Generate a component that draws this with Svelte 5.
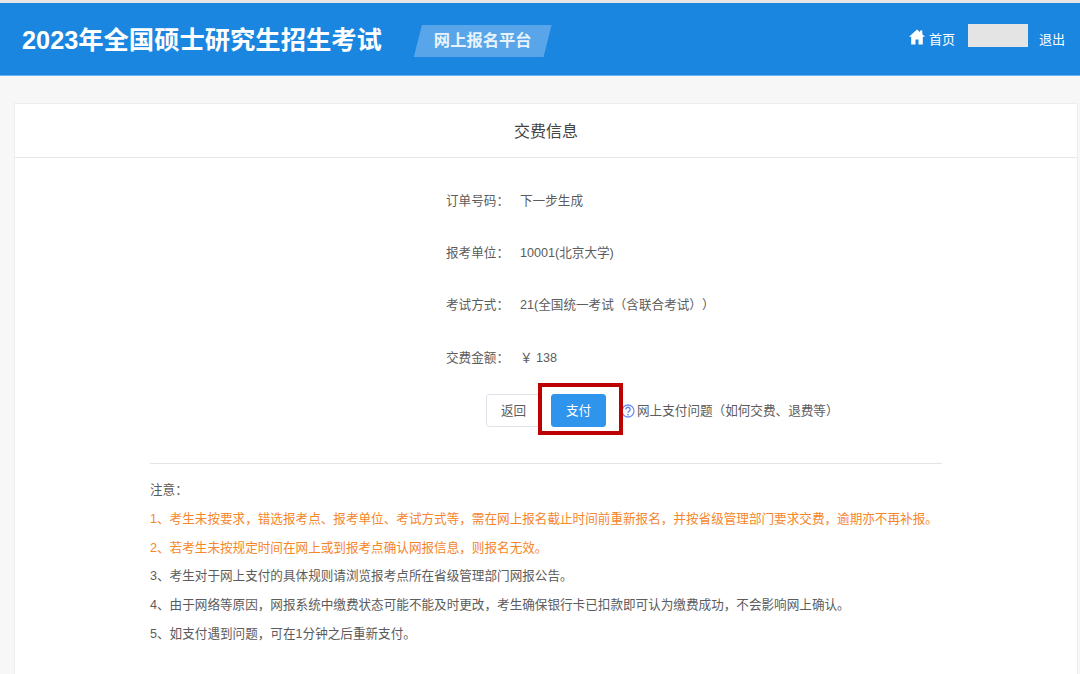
<script lang="ts">
const rows = [
	{ label: '订单号码：', value: '下一步生成' },
	{ label: '报考单位：', value: '10001(北京大学)' },
	{ label: '考试方式：', value: '21(全国统一考试（含联合考试））' },
	{ label: '交费金额：', value: '￥ 138' },
];

const notes = [
	{ text: '1、考生未按要求，错选报考点、报考单位、考试方式等，需在网上报名截止时间前重新报名，并按省级管理部门要求交费，逾期亦不再补报。', warn: true },
	{ text: '2、若考生未按规定时间在网上或到报考点确认网报信息，则报名无效。', warn: true },
	{ text: '3、考生对于网上支付的具体规则请浏览报考点所在省级管理部门网报公告。', warn: false },
	{ text: '4、由于网络等原因，网报系统中缴费状态可能不能及时更改，考生确保银行卡已扣款即可认为缴费成功，不会影响网上确认。', warn: false },
	{ text: '5、如支付遇到问题，可在1分钟之后重新支付。', warn: false },
];
</script>

<div class="page">
	<header class="header">
		<h1 class="title">2023年全国硕士研究生招生考试</h1>
		<div class="badge"><span>网上报名平台</span></div>
		<nav class="nav">
			<svg class="home" viewBox="0 0 16 16" width="16" height="16">
				<path d="M8 .4 0 7.8h2.2V15.6h4.3v-5h3v5h4.3V7.8H16L13.3 5.3V1.4h-2.2v1.9z" fill="#fff" />
			</svg>
			<span class="home-link">首页</span>
			<span class="user"></span>
			<span class="logout">退出</span>
		</nav>
	</header>

	<main class="card">
		<div class="card-title">交费信息</div>
		<div class="info">
			{#each rows as row}
				<div class="row">
					<span class="label">{row.label}</span>
					<span>{row.value}</span>
				</div>
			{/each}
		</div>
		<div class="actions">
			<button class="btn">返回</button>
			<span class="pay-wrap">
				<button class="btn primary">支付</button>
				<span class="mark"></span>
			</span>
			<svg class="help" viewBox="0 0 14 14" width="14" height="14">
				<circle cx="7" cy="7" r="6" fill="none" stroke="#6f93ee" stroke-width="1.3" />
				<path d="M4.9 5.4a2.1 2.1 0 1 1 3.2 1.8c-.8.4-1.1.8-1.1 1.6" fill="none" stroke="#5f86e6" stroke-width="1.4" />
				<circle cx="7" cy="10.6" r=".9" fill="#5f86e6" />
			</svg>
			<span class="help-text">网上支付问题（如何交费、退费等）</span>
		</div>
		<section class="notes">
			<p class="notes-title">注意：</p>
			{#each notes as note}
				<p class:warn={note.warn}>{note.text}</p>
			{/each}
		</section>
	</main>
</div>

<style>
	:global(body) {
		margin: 0;
		background: #f7f7f7;
		font-family: "Liberation Sans", "Noto Sans CJK SC", sans-serif;
		text-spacing-trim: space-all;
		overflow: hidden;
	}

	.page {
		height: 674px;
		overflow: hidden;
		border-top: 3px solid #e6e6e6;
		box-sizing: border-box;
	}

	.header {
		display: flex;
		align-items: center;
		height: 72px;
		padding: 0 15px 0 22px;
		background: #1a86e0;
		border-bottom: 1px solid #6db3ef;
		color: #fff;
	}

	.title {
		margin: -3px 0 0;
		font-size: 25.3px;
		font-weight: 700;
		white-space: nowrap;
	}

	.badge {
		margin: 4px 0 0 32px;
		padding: 0 20px;
		height: 32px;
		line-height: 31px;
		font-size: 16.3px;
		font-weight: 700;
		background: #58a5e9;
		clip-path: polygon(8px 0, 100% 0, calc(100% - 8px) 100%, 0 100%);
	}

	.badge span {
		color: #e8f3fc;
	}

	.nav {
		display: flex;
		align-items: center;
		margin-left: auto;
		font-size: 13px;
	}

	.home {
		margin: -4px 4px 0 0;
	}

	.home-link {
		margin-top: -2px;
	}

	.user {
		width: 60px;
		height: 23px;
		margin: -8px 11px 0 13px;
		background: #e4e4e4;
	}

	.logout {
		margin-top: -2px;
	}

	.card {
		margin: 27px 2px 0 14px;
		height: 600px;
		background: #fff;
		border: 1px solid #eeeeee;
		color: #5c5c5c;
		font-size: 12.6px;
	}

	.card-title {
		height: 53px;
		line-height: 55px;
		text-align: center;
		font-size: 16px;
		color: #444;
		border-bottom: 1px solid #e8e8e8;
	}

	.info {
		display: flex;
		flex-direction: column;
		padding: 15px 0 0 431px;
	}

	.row {
		display: flex;
		align-items: center;
		height: 52.3px;
	}

	.label {
		width: 74px;
	}

	.actions {
		display: flex;
		align-items: center;
		margin: 12px 0 0 471px;
		height: 33px;
	}

	.btn {
		width: 55px;
		height: 33px;
		padding: 0 0 2px;
		border: 1px solid #dfe3ea;
		border-radius: 3px;
		background: #fff;
		color: #5c5c5c;
		font: inherit;
	}

	.btn.primary {
		border-color: #2f94ec;
		background: #2f94ec;
		color: #fff;
	}

	.pay-wrap {
		position: relative;
		display: flex;
		margin: 0 15px 0 10px;
	}

	.mark {
		position: absolute;
		left: -13px;
		top: -11px;
		width: 77px;
		height: 44px;
		border: 4px solid #bd0000;
	}

	.help {
		margin: 0 2px 0 0;
	}

	.help-text {
		margin-top: -3px;
		white-space: nowrap;
	}

	.notes {
		margin: 36px 135px 0 135px;
		padding-top: 12px;
		border-top: 1px solid #e4e4e4;
	}

	.notes p {
		margin: 0;
		height: 28.7px;
		line-height: 28.7px;
		white-space: nowrap;
	}

	.notes .warn {
		color: #f5862a;
	}
</style>
